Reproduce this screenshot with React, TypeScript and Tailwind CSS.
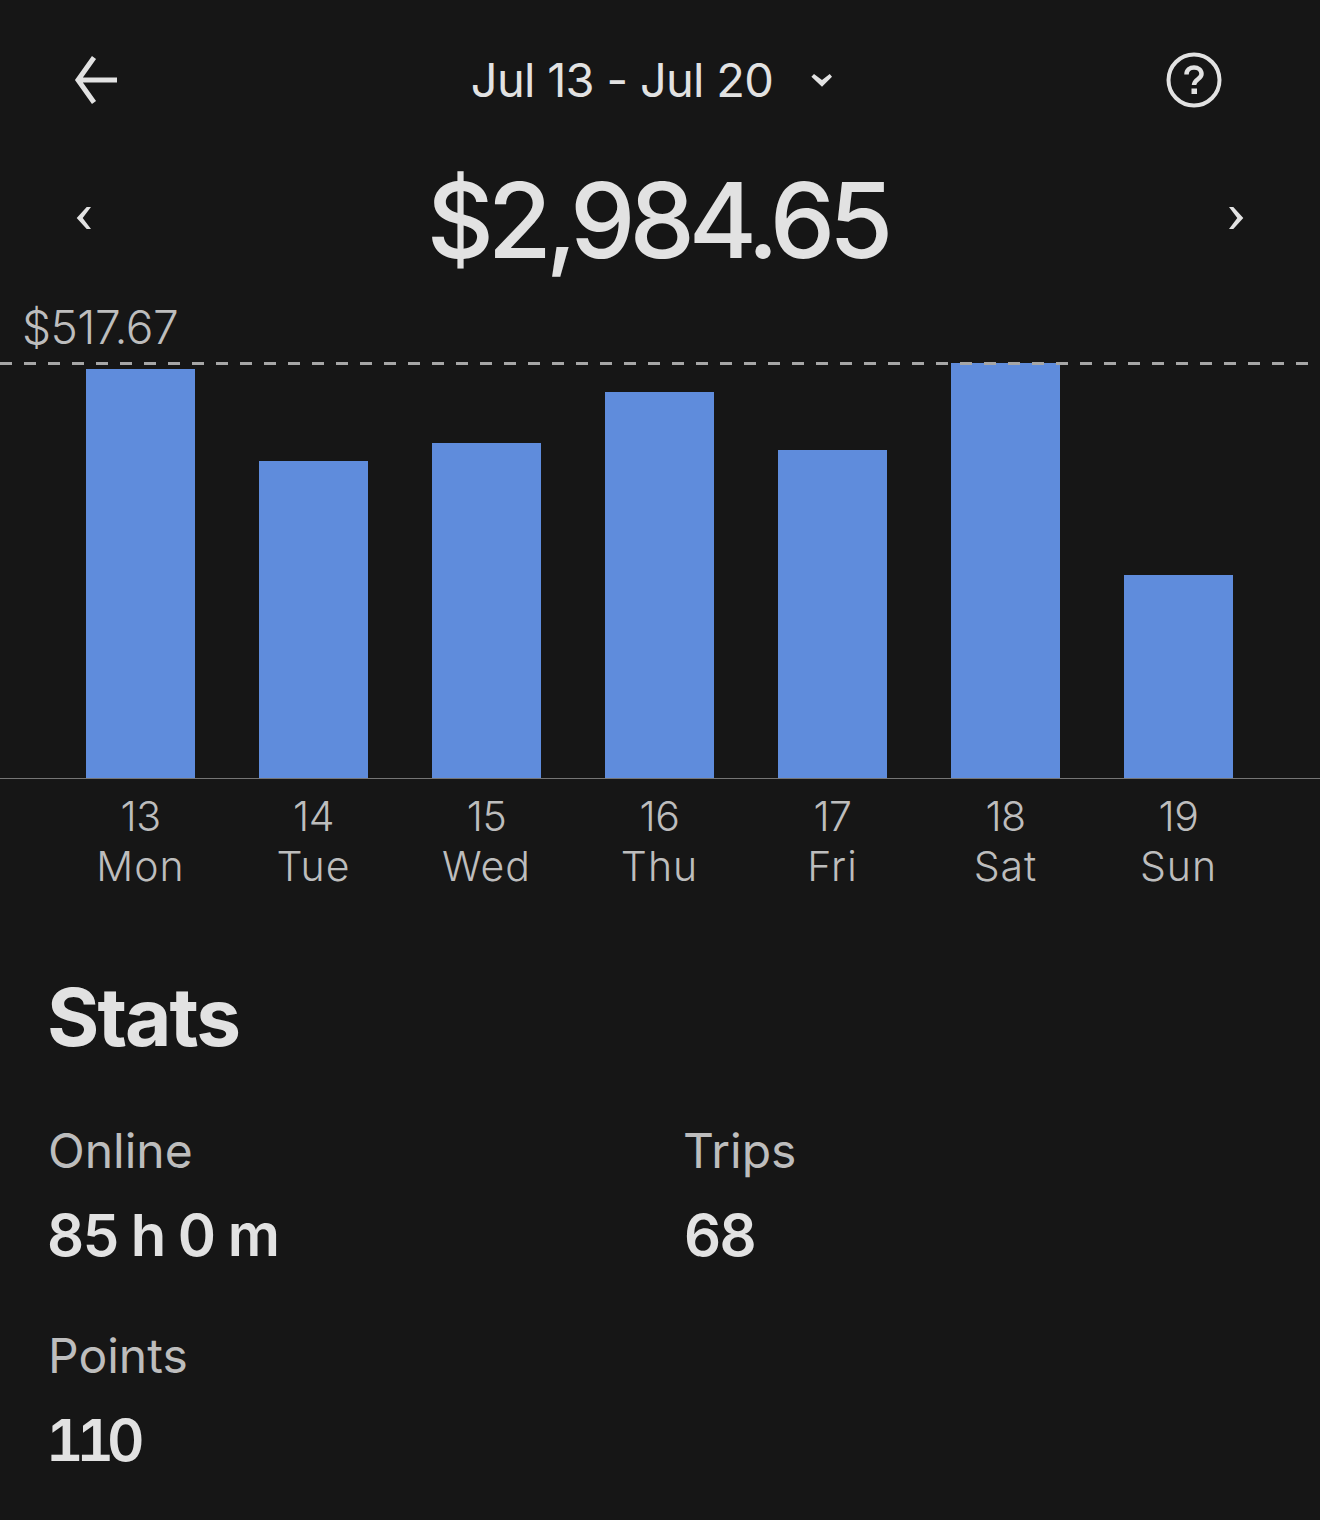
const bars = [
  { date: "13", day: "Mon", height: "h-[409px]" },
  { date: "14", day: "Tue", height: "h-[317px]" },
  { date: "15", day: "Wed", height: "h-[335px]" },
  { date: "16", day: "Thu", height: "h-[386px]" },
  { date: "17", day: "Fri", height: "h-[328px]" },
  { date: "18", day: "Sat", height: "h-[415px]" },
  { date: "19", day: "Sun", height: "h-[203px]" },
];

const Stat = ({ label, value, valueClass }: { label: string; value: string; valueClass: string }) => (
  <div>
    <p className="text-[48px] leading-[60px] text-[#bdbdbd]">{label}</p>
    <p className={`mt-[18px] text-[58px] leading-[72px] font-semibold text-[#e2e2e2] ${valueClass}`}>{value}</p>
  </div>
);

const App = () => {
  return (
    <div className="w-[1320px] h-[1520px] overflow-hidden bg-[#161616] font-['Inter',sans-serif]">
      <header className="h-[160px] pl-[72px] pr-[98px] flex items-center justify-between">
        <svg width="48" height="48" viewBox="0 0 48 48" fill="none" stroke="#e2e2e2" strokeWidth="5">
          <path d="M45 24H6M22 1.5L6 24L22 46.5" />
        </svg>
        <div className="flex items-center h-[64px] ml-[19px]">
          <span className="text-[47px] leading-[64px] font-normal text-[#e2e2e2] tracking-[-0.7px]">Jul 13 - Jul 20</span>
          <svg className="ml-[37px]" width="24" height="16" viewBox="0 0 24 16" fill="#e2e2e2">
            <polygon points="1.4,4.7 4,2 12,8 19.7,2 22,4.7 12,14.7" />
          </svg>
        </div>
        <svg width="56" height="56" viewBox="0 0 56 56" fill="none" stroke="#e2e2e2" strokeWidth="4">
          <circle cx="28" cy="28" r="25.5" />
          <path d="M20.5 22.5C20.5 18 24 15.5 28 15.5C32 15.5 35.5 18 35.5 22C35.5 27 28 27.5 28 33" strokeWidth="4.5" />
          <rect x="25.5" y="36.5" width="5.5" height="5.5" fill="#e2e2e2" stroke="none" />
        </svg>
      </header>

      <div className="h-[120px] pl-[76px] pr-[76px] flex items-center justify-between">
        <svg width="16" height="26" viewBox="0 0 16 26" fill="#e2e2e2" className="mt-[-4px]">
          <polygon points="0.7,13 10.7,2 15,2 6.7,13 15,24 10.7,24" />
        </svg>
        <p className="mr-[6px] text-[104px] leading-[120px] font-medium text-[#e2e2e2] tracking-[-6.2px]">$2,984.65</p>
        <svg width="16" height="26" viewBox="0 0 16 26" fill="#e2e2e2" className="mt-[-4px]">
          <polygon points="15.3,13 5.3,2 1,2 9.3,13 1,24 5.3,24" />
        </svg>
      </div>

      <p className="mt-[18px] pl-[22px] text-[46px] leading-[58px] font-light text-[#bdbdbd] tracking-[-0.5px]">$517.67</p>

      <section className="relative mt-[7px]">
        <svg className="absolute top-[-1.5px] left-0" width="1320" height="3" viewBox="0 0 1320 3">
          <line x1="0" y1="1.5" x2="1308" y2="1.5" stroke="#a6a6a6" strokeWidth="3" strokeDasharray="12 12" />
        </svg>
        <div className="h-[415px] px-[54px] flex items-end">
          {bars.map((bar) => (
            <div key={bar.date} className="w-[173px] flex justify-center">
              <div className={`w-[109px] bg-[#5f8cdc] ${bar.height}`} />
            </div>
          ))}
        </div>
        <div className="h-px bg-[#757575]" />
        <div className="pt-[12px] px-[54px] flex">
          {bars.map((bar) => (
            <div key={bar.date} className="w-[173px] text-center text-[41px] leading-[50px] font-light text-[#bdbdbd]">
              <p className="tracking-[-0.5px]">{bar.date}</p>
              <p className="tracking-[1px]">{bar.day}</p>
            </div>
          ))}
        </div>
      </section>

      <section className="pl-[48px] pt-[78px]">
        <h2 className="ml-[-1px] text-[80px] leading-[96px] font-bold text-[#e2e2e2] tracking-[-2px]">Stats</h2>
        <div className="mt-[56px] grid grid-cols-[635px_1fr] gap-y-[55px]">
          <Stat label="Online" value="85 h 0 m" valueClass="ml-[-1px] tracking-[-1.5px]" />
          <Stat label="Trips" value="68" valueClass="ml-[1px] tracking-[-1.5px]" />
          <Stat label="Points" value="110" valueClass="ml-[-2px] tabular-nums tracking-[-7px]" />
        </div>
      </section>
    </div>
  );
};

export default App;
